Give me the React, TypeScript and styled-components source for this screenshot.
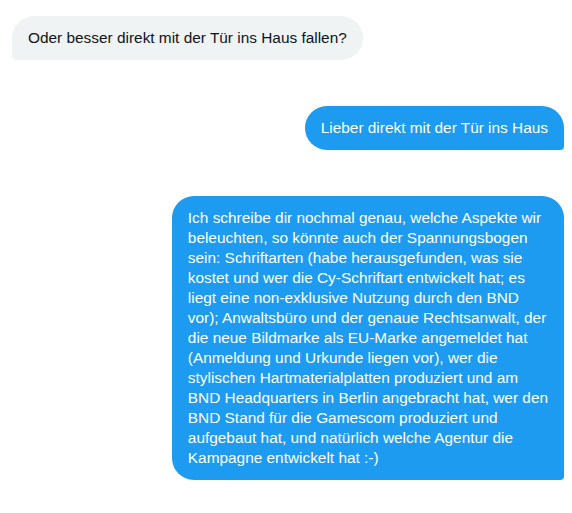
import React from "react";
import styled, { createGlobalStyle } from "styled-components";

const GlobalStyle = createGlobalStyle`
  html, body { margin: 0; padding: 0; background: #ffffff; }
  body {
    font-family: "Liberation Sans", Arial, sans-serif;
    -webkit-font-smoothing: antialiased;
  }
`;

const Thread = styled.div`
  display: flex;
  flex-direction: column;
  gap: 46px;
  padding: 16px 8px 16px 12px;
  width: 572px;
  box-sizing: border-box;
`;

const Row = styled.div<{ $mine?: boolean }>`
  display: flex;
  justify-content: ${(p) => (p.$mine ? "flex-end" : "flex-start")};
`;

const Bubble = styled.div<{ $mine?: boolean }>`
  box-sizing: border-box;
  padding: 12px 16px;
  font-size: 15.4px;
  line-height: 20px;
  white-space: pre-line;
  background: ${(p) => (p.$mine ? "#1d9bf0" : "#eff3f4")};
  color: ${(p) => (p.$mine ? "#ffffff" : "#0f1419")};
  border-radius: ${(p) => (p.$mine ? "22px 22px 4px 22px" : "22px 22px 22px 4px")};
`;

const longText = [
  "Ich schreibe dir nochmal genau, welche Aspekte wir",
  "beleuchten, so könnte auch der Spannungsbogen",
  "sein: Schriftarten (habe herausgefunden, was sie",
  "kostet und wer die Cy-Schriftart entwickelt hat; es",
  "liegt eine non-exklusive Nutzung durch den BND",
  "vor); Anwaltsbüro und der genaue Rechtsanwalt, der",
  "die neue Bildmarke als EU-Marke angemeldet hat",
  "(Anmeldung und Urkunde liegen vor), wer die",
  "stylischen Hartmaterialplatten produziert und am",
  "BND Headquarters in Berlin angebracht hat, wer den",
  "BND Stand für die Gamescom produziert und",
  "aufgebaut hat, und natürlich welche Agentur die",
  "Kampagne entwickelt hat :-)",
].join("\n");

const messages = [
  { mine: false, text: "Oder besser direkt mit der Tür ins Haus fallen?" },
  { mine: true, text: "Lieber direkt mit der Tür ins Haus" },
  { mine: true, text: longText },
];

export default function App() {
  return (
    <>
      <GlobalStyle />
      <Thread>
        {messages.map((m, i) => (
          <Row key={i} $mine={m.mine}>
            <Bubble $mine={m.mine}>{m.text}</Bubble>
          </Row>
        ))}
      </Thread>
    </>
  );
}
